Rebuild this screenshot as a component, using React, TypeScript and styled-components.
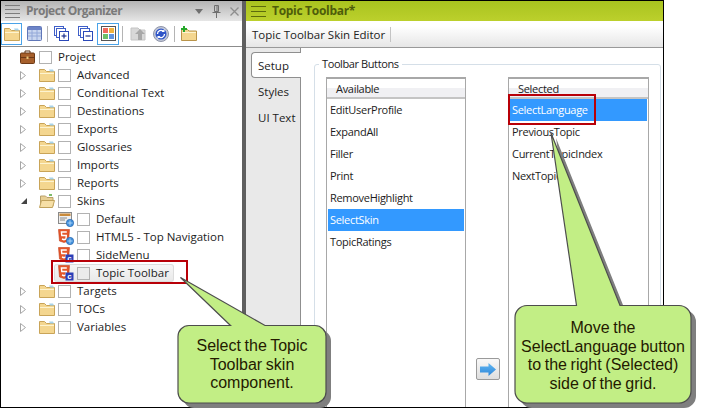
import React from "react";
import styled, { createGlobalStyle } from "styled-components";

const GlobalStyle = createGlobalStyle`
  html, body { margin: 0; padding: 0; background: #fff; }
  body { font-family: "Open Sans", "Liberation Sans", sans-serif; }
  * { box-sizing: border-box; }
`;

/* ---------- page frame ---------- */

const Page = styled.div`
  position: relative;
  width: 706px;
  height: 409px;
  overflow: hidden;
  background: #fff;
`;

const Frame = styled.div`
  display: flex;
  width: 664px;
  height: 408px;
  border: 1px solid #000;
  overflow: hidden;
  background: #fff;
`;

const LeftPanel = styled.div`
  display: flex;
  flex-direction: column;
  width: 241px;
  flex: none;
`;

const Splitter = styled.div`
  width: 4px;
  flex: none;
  background: #5f5f5f;
`;

const RightPanel = styled.div`
  display: flex;
  flex-direction: column;
  flex: 1;
  min-width: 0;
`;

/* ---------- title bars ---------- */

const TitleBar = styled.div<{ $active?: boolean }>`
  display: flex;
  align-items: center;
  height: 20px;
  flex: none;
  padding-left: ${(p) => (p.$active ? "5px" : "4px")};
  background: ${(p) =>
    p.$active
      ? "linear-gradient(#a9c31f, #bcd02c)"
      : "linear-gradient(#b4b4b4, #e6e6e6)"};
`;

const Grip = styled.div<{ $active?: boolean }>`
  display: flex;
  flex-direction: column;
  justify-content: space-between;
  width: 15px;
  height: ${(p) => (p.$active ? "11px" : "13px")};
  margin-right: 6px;
  flex: none;
  & > i {
    display: block;
    height: 1px;
    background: ${(p) => (p.$active ? "#5c6b0c" : "#7d7d7d")};
  }
`;

const TitleText = styled.span<{ $active?: boolean }>`
  font-size: 12px;
  font-weight: 700;
  line-height: 20px;
  letter-spacing: ${(p) => (p.$active ? "-0.3px" : "-0.5px")};
  color: ${(p) => (p.$active ? "#4e5c0a" : "#7a7a7a")};
`;

const TitleActions = styled.div`
  display: flex;
  align-items: center;
  gap: 9px;
  margin-left: auto;
  padding-right: 3px;
`;

/* ---------- left toolbar ---------- */

const Toolbar = styled.div`
  display: flex;
  align-items: center;
  height: 26px;
  flex: none;
  border-bottom: 1px solid #8c8c8c;
  background: #fff;
`;

const ToolButton = styled.div<{ $on?: boolean; $w?: number }>`
  display: flex;
  align-items: center;
  justify-content: center;
  width: ${(p) => p.$w ?? 23}px;
  height: 22px;
  flex: none;
  border: 1px solid ${(p) => (p.$on ? "#4aa3e8" : "transparent")};
`;

const ToolSep = styled.div<{ $l: number; $r: number }>`
  width: 1px;
  height: 16px;
  flex: none;
  margin: 0 ${(p) => p.$r}px 0 ${(p) => p.$l}px;
  background: #b4b4b4;
`;

/* ---------- tree ---------- */

const Tree = styled.div`
  flex: 1;
  padding: 1px 0 0 19px;
`;

const Row = styled.div`
  display: flex;
  align-items: center;
  height: 18px;
`;

const Indent = styled.div<{ $depth: number }>`
  display: flex;
  align-items: center;
  width: ${(p) => p.$depth * 19}px;
  flex: none;
`;

const RowBody = styled.div<{ $selected?: boolean }>`
  display: flex;
  align-items: center;
  height: 18px;
  margin-left: -3px;
  padding: 0 4px 0 3px;
  border-radius: 3px;
  border: 1px solid ${(p) => (p.$selected ? "#dcdcdc" : "transparent")};
  border-left-width: 0;
  box-shadow: ${(p) => (p.$selected ? "-1px 0 0 #dcdcdc" : "none")};
  background: ${(p) =>
    p.$selected ? "linear-gradient(#f6f6f6, #e9e9e9)" : "transparent"};
`;

const IconSlot = styled.div`
  display: flex;
  align-items: center;
  width: 19px;
  height: 16px;
  flex: none;
`;

const Check = styled.span`
  display: block;
  width: 13px;
  height: 13px;
  margin-right: 6px;
  flex: none;
  border: 1px solid #b2b2b2;
  background: #fff;
`;

const RowCheck = styled(Check)<{ $selected?: boolean }>`
  background: ${(p) => (p.$selected ? "#ececec" : "#fff")};
`;

const RowLabel = styled.span`
  font-size: 11.5px;
  line-height: 16px;
  white-space: nowrap;
  color: #1c1c1c;
`;

/* ---------- editor ---------- */

const SubBar = styled.div`
  display: flex;
  align-items: center;
  height: 27px;
  flex: none;
  padding-left: 6px;
  border-bottom: 1px solid #999;
  background: linear-gradient(#fff 20%, #e6e6e6);
`;

const SubBarLabel = styled.span`
  font-size: 11.5px;
  color: #222;
  padding-right: 5px;
  border-right: 1px solid #c4c4c4;
  line-height: 15px;
`;

const EditorBody = styled.div`
  display: flex;
  flex: 1;
  min-height: 0;
`;

const TabRail = styled.div`
  display: flex;
  flex-direction: column;
  width: 55px;
  flex: none;
  padding: 4px 0 0 5px;
  background: #e9e9e9;
  border-right: 1px solid #8f8f8f;
`;

const Tab = styled.div<{ $active?: boolean }>`
  height: 26px;
  margin-right: ${(p) => (p.$active ? "-1px" : "0")};
  padding-left: 6px;
  font-size: 11.5px;
  line-height: 26px;
  color: #222;
  position: relative;
  background: ${(p) => (p.$active ? "#fff" : "transparent")};
  border: 1px solid ${(p) => (p.$active ? "#8f8f8f" : "transparent")};
  border-right: 0;
  border-radius: 4px 0 0 4px;
`;

const Content = styled.div`
  flex: 1;
  min-width: 0;
  padding: 9px 2px 0 13px;
  background: #fff;
`;

const Group = styled.fieldset`
  display: grid;
  grid-template-columns: 140px 42px 141px;
  height: 420px;
  margin: 0;
  padding: 6px 11px 0 11px;
  border: 1px solid #d5dfe8;
  border-radius: 3px;
`;

const GroupTitle = styled.legend`
  margin-left: -7px;
  padding: 0 3px;
  font-size: 11px;
  letter-spacing: -0.4px;
  line-height: 14px;
  color: #222;
`;

const ListBox = styled.div`
  height: 400px;
  border: 1px solid #a8a8a8;
  border-top-width: 2px;
  background: #fff;
`;

const ListHead = styled.div`
  height: 20px;
  padding-left: 9px;
  font-size: 11px;
  letter-spacing: -0.3px;
  line-height: 20px;
  color: #222;
  border-bottom: 2px solid #c4c4c4;
  background: linear-gradient(#fff 50%, #f0f0f3 50%);
`;

const ListItem = styled.div<{ $selected?: boolean }>`
  height: 22px;
  padding-left: ${(p) => (p.$selected ? "2px" : "3px")};
  margin: ${(p) => (p.$selected ? "0 1px" : "0")};
  font-size: 11px;
  letter-spacing: -0.3px;
  line-height: 21px;
  color: ${(p) => (p.$selected ? "#fff" : "#1c1c1c")};
  background: ${(p) => (p.$selected ? "#3399ff" : "transparent")};
`;

const MoveColumn = styled.div`
  display: flex;
  justify-content: center;
  padding: 281px 0 0 2px;
`;

const MoveButton = styled.div`
  display: flex;
  align-items: center;
  justify-content: center;
  width: 24px;
  height: 22px;
  border: 1px solid #9a9a9a;
  border-radius: 2px;
  background: linear-gradient(#f8f8f8, #dedede);
`;

/* ---------- annotations ---------- */

const RedBox = styled.div<{ $x: number; $y: number; $w: number; $h: number }>`
  position: absolute;
  left: ${(p) => p.$x}px;
  top: ${(p) => p.$y}px;
  width: ${(p) => p.$w}px;
  height: ${(p) => p.$h}px;
  border: 2px solid #b80008;
`;

const Callout = styled.div<{ $x: number; $y: number; $w: number; $h: number }>`
  position: absolute;
  left: ${(p) => p.$x}px;
  top: ${(p) => p.$y}px;
  width: ${(p) => p.$w}px;
  height: ${(p) => p.$h}px;
`;

const CalloutText = styled.div<{ $top: number; $left: number; $w: number }>`
  position: absolute;
  top: ${(p) => p.$top}px;
  left: ${(p) => p.$left}px;
  width: ${(p) => p.$w}px;
  font-family: "Liberation Sans", Arial, sans-serif;
  font-size: 16px;
  line-height: 18.5px;
  word-spacing: -0.8px;
  text-align: center;
  color: #241a00;
`;

const CalloutShape = styled.svg`
  display: block;
  position: absolute;
  left: 0;
  top: 0;
`;

/* ---------- icons ---------- */

const Folder = () => (
  <svg width="16" height="14" viewBox="0 0 16 14">
    <path d="M.5 13.5V1.5h5l2 2h8v10z" fill="#f4d68f" stroke="#c9a458" />
    <path d="M1 5h14v1H1z" fill="#fdf3cf" />
    <path d="M10 1.5h4l1 2h-4z" fill="#a8d4ec" />
  </svg>
);

const OpenFolder = () => (
  <svg width="16" height="14" viewBox="0 0 16 14">
    <path d="M1.5 12V2h5l1.500 1.500h6V12z" fill="#e8cf94" stroke="#b9a06a" />
    <path d="M.5 13.500l2-7h13l-2 7z" fill="#f6dfa6" stroke="#c0a25c" />
    <path d="M10 0h3v2h-3z" fill="#7dbb6a" />
  </svg>
);

const Briefcase = () => (
  <svg width="15" height="14" viewBox="0 0 15 14">
    <path d="M5 3V1h5v2" fill="none" stroke="#5c3315" />
    <rect x=".5" y="3" width="14" height="10.500" rx="1" fill="#a65f2b" stroke="#6d3a17" />
    <path d="M1 7h13v1H1z" fill="#6d3a17" />
    <rect x="6.500" y="6.500" width="2" height="2.500" fill="#e8c47a" />
  </svg>
);

const Arrow = ({ open }: { open?: boolean }) =>
  open ? (
    <svg width="6" height="6" viewBox="0 0 6 6" style={{ marginLeft: 1 }}>
      <path d="M6 0v6H0z" fill="#444" />
    </svg>
  ) : (
    <svg width="6" height="9" viewBox="0 0 6 9">
      <path d="M.5.500l5 4-5 4z" fill="#fff" stroke="#a6a6a6" />
    </svg>
  );

const Globe = ({ x, y }: { x: number; y: number }) => (
  <g transform={`translate(${x} ${y})`}>
    <circle cx="4" cy="4" r="3.700" fill="#3f8fdc" stroke="#2a63a8" strokeWidth=".6" />
    <path d="M1.500 4h5M4 1.500v5" stroke="#bfe0fa" strokeWidth=".8" />
  </g>
);

const Html5Shield = () => (
  <>
    <path d="M.5.500h11l-1 11.500-4.500 1.500L1.500 12z" fill="#e4572b" stroke="#c43d18" strokeWidth=".6" />
    <path d="M8.800 3H3.400l.4 3.500h4.500L8 10l-2 .7-2-.7" fill="none" stroke="#fff" strokeWidth="1.400" />
  </>
);

const CBadge = () => (
  <g>
    <rect x="7.500" y="7.500" width="8" height="8" fill="#2b3fb8" />
    <text x="11.500" y="14" fontSize="8" fontWeight="700" textAnchor="middle" fill="#fff" fontFamily="Liberation Sans, sans-serif">
      c
    </text>
  </g>
);

const SkinIcon = ({ kind }: { kind: string }) => (
  <svg width="16" height="16" viewBox="0 0 16 16" style={{ overflow: "visible" }}>
    {kind === "default" && (
      <>
        <rect x=".5" y="1.500" width="13" height="11" fill="#efefef" stroke="#8a8a8a" />
        <rect x="1.500" y="2.500" width="11" height="2.500" fill="#c98a3a" />
        <path d="M2 7h7M2 9h5" stroke="#8a8a8a" />
        <Globe x={8} y={8} />
      </>
    )}
    {kind === "html" && (
      <>
        <Html5Shield />
        <Globe x={8} y={8} />
      </>
    )}
    {kind === "comp" && (
      <>
        <Html5Shield />
        <CBadge />
      </>
    )}
  </svg>
);

const TableIcon = () => (
  <svg width="15" height="15" viewBox="0 0 15 15">
    <rect x=".5" y=".5" width="14" height="14" rx="1" fill="#c9d6ef" stroke="#6077b8" />
    <rect x="1" y="1" width="13" height="3" fill="#6c84c8" />
    <path d="M1 7h13M1 10h13M5 4v10M10 4v10" stroke="#93a8d8" />
  </svg>
);

const StackIcon = ({ plus }: { plus?: boolean }) => (
  <svg width="15" height="15" viewBox="0 0 15 15">
    <rect x=".5" y=".5" width="9" height="9" fill="#fff" stroke="#3f5fc8" />
    <rect x="2.500" y="2.500" width="9" height="9" fill="#fff" stroke="#3f5fc8" />
    <rect x="5.500" y="5.500" width="9" height="9" fill="#fff" stroke="#2b49b8" />
    <path d="M7.500 10h5" stroke="#1c2f8c" strokeWidth="1.200" />
    {plus && <path d="M10 7.500v5" stroke="#1c2f8c" strokeWidth="1.200" />}
  </svg>
);

const PaletteIcon = () => (
  <svg width="15" height="15" viewBox="0 0 15 15">
    <rect x=".5" y=".5" width="14" height="14" fill="#fff" stroke="#555" />
    <rect x="2" y="2" width="5" height="5" fill="#ef6a5e" />
    <rect x="8" y="2" width="5" height="5" fill="#f2b33d" />
    <rect x="2" y="8" width="5" height="5" fill="#6cc06a" />
    <rect x="8" y="8" width="5" height="5" fill="#5f94e0" />
  </svg>
);

const GreyUpIcon = () => (
  <svg width="16" height="15" viewBox="0 0 16 15">
    <path d="M1 2h7l2 2h5v10H1z" fill="#d8d8d8" stroke="#c4c4c4" />
    <path d="M10 3l5 5h-3v6H8V8H5z" fill="#a8a8a8" />
  </svg>
);

const SyncIcon = () => (
  <svg width="16" height="16" viewBox="0 0 16 16">
    <circle cx="8" cy="8" r="7.500" fill="#c2c8d8" stroke="#8e94a8" />
    <circle cx="8" cy="8" r="5.500" fill="#2f55c8" />
    <path d="M4.500 8a3.500 3.500 0 0 1 6-2.500M11.500 8a3.500 3.500 0 0 1-6 2.500" fill="none" stroke="#fff" strokeWidth="1.300" />
    <path d="M11.500 3v3h-3zM4.500 13v-3h3z" fill="#fff" />
  </svg>
);

const AddFolderIcon = () => (
  <svg width="16" height="15" viewBox="0 0 16 15">
    <path d="M.5 14.500V3.500h6l1.500 1.500h7.500v9.500z" fill="#f4d68f" stroke="#b9944a" />
    <path d="M1 6h14v1H1z" fill="#fdf3cf" />
    <path d="M2 0h2v2h2v2H4v2H2V4H0V2h2z" fill="#27a82b" />
  </svg>
);

const DropIcon = () => (
  <svg width="8" height="5" viewBox="0 0 8 5">
    <path d="M0 0h8L4 5z" fill="#6f6f6f" />
  </svg>
);

const PinIcon = () => (
  <svg width="9" height="13" viewBox="0 0 9 13">
    <path d="M2.500.500h4v6h-4zM.5 7.500h8M4.500 8v5M5 1v5" fill="none" stroke="#6f6f6f" />
  </svg>
);

const CloseIcon = () => (
  <svg width="9" height="9" viewBox="0 0 9 9">
    <path d="M.5.500l8 8M8.500.500l-8 8" stroke="#8d8d8d" strokeWidth="1.300" />
  </svg>
);

const RightArrow = () => (
  <svg width="16" height="13" viewBox="0 0 16 13">
    <defs>
      <linearGradient id="mv" x1="0" y1="0" x2="0" y2="1">
        <stop offset="0" stopColor="#5fb6f2" />
        <stop offset="1" stopColor="#2f86d8" />
      </linearGradient>
    </defs>
    <path d="M0 3.500h8.500V0L16 6.500 8.500 13V9.500H0z" fill="url(#mv)" />
  </svg>
);

/* ---------- data ---------- */

type TreeItem = {
  label: string;
  depth: number;
  icon: "case" | "folder" | "open" | "default" | "html" | "comp";
  arrow?: "open" | "closed";
  selected?: boolean;
};

const treeItems: TreeItem[] = [
  { label: "Project", depth: 0, icon: "case" },
  { label: "Advanced", depth: 1, icon: "folder", arrow: "closed" },
  { label: "Conditional Text", depth: 1, icon: "folder", arrow: "closed" },
  { label: "Destinations", depth: 1, icon: "folder", arrow: "closed" },
  { label: "Exports", depth: 1, icon: "folder", arrow: "closed" },
  { label: "Glossaries", depth: 1, icon: "folder", arrow: "closed" },
  { label: "Imports", depth: 1, icon: "folder", arrow: "closed" },
  { label: "Reports", depth: 1, icon: "folder", arrow: "closed" },
  { label: "Skins", depth: 1, icon: "open", arrow: "open" },
  { label: "Default", depth: 2, icon: "default" },
  { label: "HTML5 - Top Navigation", depth: 2, icon: "html" },
  { label: "SideMenu", depth: 2, icon: "comp" },
  { label: "Topic Toolbar", depth: 2, icon: "comp", selected: true },
  { label: "Targets", depth: 1, icon: "folder", arrow: "closed" },
  { label: "TOCs", depth: 1, icon: "folder", arrow: "closed" },
  { label: "Variables", depth: 1, icon: "folder", arrow: "closed" },
];

const available = ["EditUserProfile", "ExpandAll", "Filler", "Print", "RemoveHighlight", "SelectSkin", "TopicRatings"];
const selected = ["SelectLanguage", "PreviousTopic", "CurrentTopicIndex", "NextTopic"];

const renderIcon = (icon: TreeItem["icon"]) => {
  if (icon === "case") return <Briefcase />;
  if (icon === "folder") return <Folder />;
  if (icon === "open") return <OpenFolder />;
  return <SkinIcon kind={icon} />;
};

const App = () => (
  <Page>
    <GlobalStyle />
    <Frame>
      <LeftPanel>
        <TitleBar>
          <Grip>
            <i />
            <i />
            <i />
            <i />
          </Grip>
          <TitleText>Project Organizer</TitleText>
          <TitleActions>
            <DropIcon />
            <PinIcon />
            <CloseIcon />
          </TitleActions>
        </TitleBar>
        <Toolbar>
          <ToolButton $on $w={21}>
            <Folder />
          </ToolButton>
          <ToolButton $w={24}>
            <TableIcon />
          </ToolButton>
          <ToolSep $l={1} $r={2} />
          <ToolButton>
            <StackIcon plus />
          </ToolButton>
          <ToolButton $w={24}>
            <StackIcon />
          </ToolButton>
          <ToolButton $on $w={22}>
            <PaletteIcon />
          </ToolButton>
          <ToolSep $l={3} $r={3} />
          <ToolButton>
            <GreyUpIcon />
          </ToolButton>
          <ToolButton>
            <SyncIcon />
          </ToolButton>
          <ToolSep $l={2} $r={2} />
          <ToolButton>
            <AddFolderIcon />
          </ToolButton>
        </Toolbar>
        <Tree>
          {treeItems.map((item) => (
            <Row key={item.label}>
              <Indent $depth={item.depth}>
                {item.arrow && <Arrow open={item.arrow === "open"} />}
              </Indent>
              <RowBody $selected={item.selected}>
                <IconSlot>{renderIcon(item.icon)}</IconSlot>
                <RowCheck $selected={item.selected} />
                <RowLabel>{item.label}</RowLabel>
              </RowBody>
            </Row>
          ))}
        </Tree>
      </LeftPanel>
      <Splitter />
      <RightPanel>
        <TitleBar $active>
          <Grip $active>
            <i />
            <i />
            <i />
          </Grip>
          <TitleText $active>Topic Toolbar*</TitleText>
        </TitleBar>
        <SubBar>
          <SubBarLabel>Topic Toolbar Skin Editor</SubBarLabel>
        </SubBar>
        <EditorBody>
          <TabRail>
            <Tab $active>Setup</Tab>
            <Tab>Styles</Tab>
            <Tab>UI Text</Tab>
          </TabRail>
          <Content>
            <Group>
              <GroupTitle>Toolbar Buttons</GroupTitle>
              <ListBox>
                <ListHead>Available</ListHead>
                {available.map((name) => (
                  <ListItem key={name} $selected={name === "SelectSkin"}>
                    {name}
                  </ListItem>
                ))}
              </ListBox>
              <MoveColumn>
                <MoveButton>
                  <RightArrow />
                </MoveButton>
              </MoveColumn>
              <ListBox>
                <ListHead>Selected</ListHead>
                {selected.map((name) => (
                  <ListItem key={name} $selected={name === "SelectLanguage"}>
                    {name}
                  </ListItem>
                ))}
              </ListBox>
            </Group>
          </Content>
        </EditorBody>
      </RightPanel>
    </Frame>

    <RedBox $x={51} $y={260} $w={137} $h={24} />
    <RedBox $x={508} $y={94} $w={88} $h={31} />

    <Callout $x={175} $y={275} $w={160} $h={134}>
      <CalloutShape width="160" height="134" viewBox="0 0 160 134">
        <path
          d="M5 2 L55 50 H140 a11 11 0 0 1 11 11 V117 a11 11 0 0 1 -11 11 H14 a11 11 0 0 1 -11 -11 V61 a11 11 0 0 1 11 -11 H55 Z"
          transform="translate(5 5)"
          fill="#7f7f7f"
        />
        <path
          d="M5.500 2.500 L55.500 50.500 H14 a11 11 0 0 0 -11 11 V117 a11 11 0 0 0 11 11 H140 a11 11 0 0 0 11 -11 V61.500 a11 11 0 0 0 -11 -11 H90 Z"
          fill="#c2ee85"
          stroke="#4d4d4d"
          strokeWidth="1.200"
        />
      </CalloutShape>
      <CalloutText $top={62} $left={3} $w={148}>
        Select the Topic
        <br />
        Toolbar skin
        <br />
        component.
      </CalloutText>
    </Callout>

    <Callout $x={512} $y={130} $w={190} $h={279}>
      <CalloutShape width="190" height="279" viewBox="0 0 190 279">
        <path
          d="M39 3 L108 175 H167 a12 12 0 0 1 12 12 V261 a12 12 0 0 1 -12 12 H15 a12 12 0 0 1 -12 -12 V187 a12 12 0 0 1 12 -12 H64 Z"
          transform="translate(5 5)"
          fill="#7f7f7f"
        />
        <path
          d="M39 3 L64.500 175.500 H15 a12 12 0 0 0 -12 12 V261 a12 12 0 0 0 12 12 H167 a12 12 0 0 0 12 -12 V187.500 a12 12 0 0 0 -12 -12 H108 Z"
          fill="#c2ee85"
          stroke="#4d4d4d"
          strokeWidth="1.200"
        />
      </CalloutShape>
      <CalloutText $top={189} $left={3} $w={176}>
        Move the
        <br />
        SelectLanguage button
        <br />
        to the right (Selected)
        <br />
        side of the grid.
      </CalloutText>
    </Callout>
  </Page>
);

export default App;
